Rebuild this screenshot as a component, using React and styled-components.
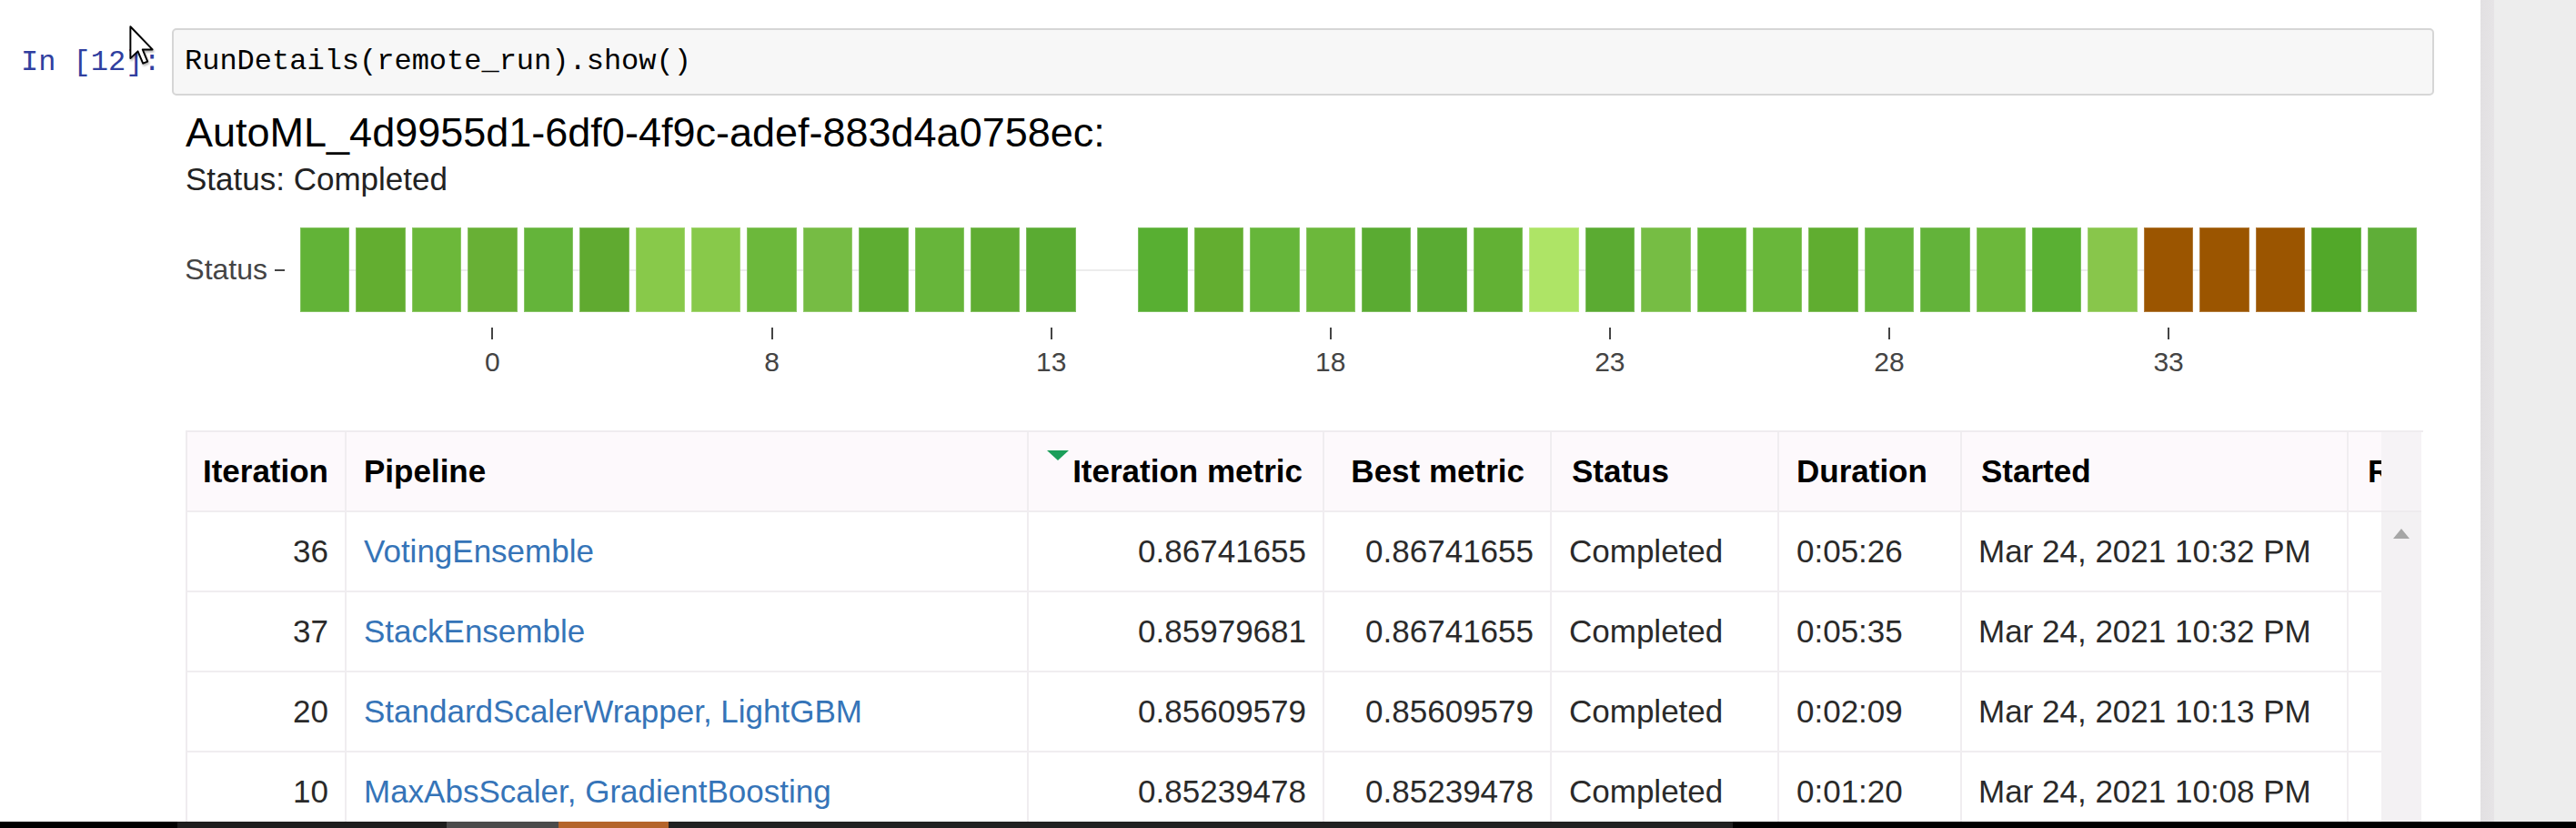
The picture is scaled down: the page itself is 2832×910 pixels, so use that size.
import React from 'react';
import styled, { createGlobalStyle } from 'styled-components';

const GlobalStyle = createGlobalStyle`
  html, body {
    margin: 0;
    padding: 0;
    background: #fff;
    overflow: hidden;
  }
  body {
    font-family: "Liberation Sans", Arial, sans-serif;
  }
`;

const bars = [
  '#62b337', '#63ae30', '#6cb83a', '#68b035', '#64b43a', '#60aa30', '#88c94a',
  '#88c94a', '#6cb83b', '#76bc44', '#5ead32', '#67b53a', '#60ad33', '#5aab32',
  null,
  '#58af32', '#63ae30', '#66b63a', '#6cb83b', '#5aab32', '#5aab33', '#62b134',
  '#aee466', '#5bab32', '#76bd44', '#65b535', '#69b73a', '#60ad30', '#64b43a',
  '#63b33a', '#6cb83b', '#5ab033', '#88c64b', '#9b5500', '#9b5500', '#9b5500',
  '#52a829', '#5fae38',
];

const ticks = { 3: '0', 8: '8', 13: '13', 18: '18', 23: '23', 28: '28', 33: '33' };

const columns = [
  { title: 'Iteration', width: 175, align: 'right', hpad: 18, pad: 18 },
  { title: 'Pipeline', width: 750, align: 'left', hpad: 19, pad: 19 },
  { title: 'Iteration metric', width: 325, align: 'right', hpad: 22, pad: 18, sorted: true },
  { title: 'Best metric', width: 250, align: 'right', hpad: 28, pad: 18 },
  { title: 'Status', width: 250, align: 'left', hpad: 22, pad: 19 },
  { title: 'Duration', width: 201, align: 'left', hpad: 19, pad: 19 },
  { title: 'Started', width: 425, align: 'left', hpad: 21, pad: 18 },
  { title: 'Run ID', width: 300, align: 'left', hpad: 21, pad: 19 },
];

const runs = [
  ['36', 'VotingEnsemble', '0.86741655', '0.86741655', 'Completed', '0:05:26', 'Mar 24, 2021 10:32 PM', ''],
  ['37', 'StackEnsemble', '0.85979681', '0.86741655', 'Completed', '0:05:35', 'Mar 24, 2021 10:32 PM', ''],
  ['20', 'StandardScalerWrapper, LightGBM', '0.85609579', '0.85609579', 'Completed', '0:02:09', 'Mar 24, 2021 10:13 PM', ''],
  ['10', 'MaxAbsScaler, GradientBoosting', '0.85239478', '0.85239478', 'Completed', '0:01:20', 'Mar 24, 2021 10:08 PM', ''],
];

const taskbar = [
  [195, '#000'], [296, '#1d1d1d'], [123, '#4b4b4b'], [121, '#b4642b'], [1170, '#202020'], [927, '#000'],
];

const gridTemplate = columns.map((c) => `${c.width}px`).join(' ');

function App() {
  return (
    <>
      <GlobalStyle />
      <Screen>
        <Workspace>
          <Notebook>
            <Cell>
              <Prompt>In [12]:</Prompt>
              <InputBox>RunDetails(remote_run).show()</InputBox>
            </Cell>

            <Output>
              <RunTitle>AutoML_4d9955d1-6df0-4f9c-adef-883d4a0758ec:</RunTitle>
              <RunStatus>Status: Completed</RunStatus>

              <Chart>
                <AxisLabel>
                  Status
                  <AxisDash />
                </AxisLabel>
                <PlotColumn>
                  <BarGrid>
                    {bars.map((c, i) => (c ? <Bar key={i} $color={c} /> : <span key={i} />))}
                  </BarGrid>
                  <TickGrid>
                    {bars.map((_, i) => (
                      <TickCell key={i}>
                        {ticks[i] !== undefined && (
                          <>
                            <TickMark />
                            <TickLabel>{ticks[i]}</TickLabel>
                          </>
                        )}
                      </TickCell>
                    ))}
                  </TickGrid>
                </PlotColumn>
              </Chart>

              <TableFrame>
                <Viewport>
                  <HeaderRow>
                    {columns.map((c) => (
                      <HeaderCell key={c.title} $align={c.align} $pad={c.hpad}>
                        {c.sorted && <SortArrow />}
                        {c.title}
                      </HeaderCell>
                    ))}
                  </HeaderRow>
                  {runs.map((r) => (
                    <BodyRow key={r[0]}>
                      {r.map((v, i) => (
                        <BodyCell key={i} $align={columns[i].align} $pad={columns[i].pad}>
                          {i === 1 ? <PipelineLink>{v}</PipelineLink> : v}
                        </BodyCell>
                      ))}
                    </BodyRow>
                  ))}
                </Viewport>
                <ScrollBar>
                  <ScrollHead />
                  <ScrollTrack>
                    <ScrollUp />
                  </ScrollTrack>
                </ScrollBar>
              </TableFrame>
            </Output>

            <Pointer viewBox="0 0 20 31" width="30" height="46">
              <path
                d="M1.5 1.5 L1.5 25 L7 19.8 L10.8 28.8 L14.2 27.3 L10.5 18.5 L17.8 18.5 Z"
                fill="#fff"
                stroke="#000"
                strokeWidth="1.3"
                strokeLinejoin="round"
              />
            </Pointer>
          </Notebook>
          <Gutter />
        </Workspace>
        <Taskbar>
          {taskbar.map(([w, c], i) => (
            <TaskSegment key={i} $w={w} $color={c} />
          ))}
        </Taskbar>
      </Screen>
    </>
  );
}

const Screen = styled.div`
  width: 2832px;
  height: 910px;
  display: flex;
  flex-direction: column;
`;

const Workspace = styled.div`
  height: 903px;
  display: flex;
  overflow: hidden;
`;

const Notebook = styled.div`
  position: relative;
  flex: 1;
  background: #fff;
  overflow: hidden;
`;

const Gutter = styled.div`
  width: 105px;
  background: linear-gradient(to right, #e2e0e2 0, #e6e4e6 15px, #ededed 15px);
`;

const Cell = styled.div`
  display: flex;
  padding-top: 31px;
`;

const Prompt = styled.div`
  width: 189px;
  box-sizing: border-box;
  padding: 1px 0 0 23px;
  font-family: "Liberation Mono", "DejaVu Sans Mono", monospace;
  font-size: 32px;
  line-height: 74px;
  color: #303f9f;
  white-space: nowrap;
  overflow: hidden;
`;

const InputBox = styled.div`
  width: 2487px;
  height: 74px;
  box-sizing: border-box;
  padding-left: 12px;
  border: 2px solid #d6d6d6;
  border-radius: 5px;
  background: #f7f7f7;
  font-family: "Liberation Mono", "DejaVu Sans Mono", monospace;
  font-size: 32px;
  line-height: 70px;
  color: #000;
`;

const Output = styled.div`
  padding-left: 189px;
`;

const RunTitle = styled.div`
  margin: 14px 0 0 15px;
  font-size: 45px;
  line-height: 52px;
  color: #000;
`;

const RunStatus = styled.div`
  margin: 5px 0 0 15px;
  font-size: 35px;
  line-height: 40px;
  color: #222;
`;

const Chart = styled.div`
  display: flex;
  margin-top: 33px;
`;

const AxisLabel = styled.div`
  width: 141px;
  height: 93px;
  box-sizing: border-box;
  padding-right: 17px;
  display: flex;
  align-items: center;
  justify-content: flex-end;
  gap: 8px;
  font-size: 32px;
  color: #444;
`;

const AxisDash = styled.span`
  width: 11px;
  height: 2px;
  background: #444;
`;

const PlotColumn = styled.div`
  width: 2327px;
`;

const BarGrid = styled.div`
  display: grid;
  grid-template-columns: repeat(38, 1fr);
  column-gap: 7px;
  height: 93px;
  background: linear-gradient(#ececec, #ececec) center / 100% 2px no-repeat;
`;

const Bar = styled.div`
  background: ${(p) => p.$color};
  box-shadow: inset 0 0 0 1px rgba(255, 255, 255, 0.22);
`;

const TickGrid = styled.div`
  display: grid;
  grid-template-columns: repeat(38, 1fr);
  column-gap: 7px;
`;

const TickCell = styled.div`
  display: flex;
  flex-direction: column;
  align-items: center;
`;

const TickMark = styled.span`
  width: 2px;
  height: 13px;
  margin-top: 17px;
  background: #444;
`;

const TickLabel = styled.span`
  margin-top: 8px;
  font-size: 30px;
  line-height: 34px;
  color: #444;
`;

const TableFrame = styled.div`
  display: flex;
  width: 2458px;
  height: 500px;
  margin: 58px 0 0 15px;
  border-top: 2px solid #efecef;
  border-left: 2px solid #efecef;
`;

const Viewport = styled.div`
  width: 2412px;
  overflow: hidden;
`;

const RowBase = styled.div`
  display: grid;
  grid-template-columns: ${gridTemplate};
  height: 88px;
  box-sizing: border-box;
  border-bottom: 2px solid #f0edf0;
`;

const HeaderRow = styled(RowBase)`
  background: #fdf9fc;
`;

const BodyRow = styled(RowBase)`
  background: #fff;
`;

const CellBase = styled.div`
  position: relative;
  display: flex;
  align-items: center;
  justify-content: ${(p) => (p.$align === 'right' ? 'flex-end' : 'flex-start')};
  padding: 0 ${(p) => p.$pad}px;
  border-right: 2px solid #f0edf0;
  font-size: 35px;
  white-space: nowrap;
  overflow: hidden;
`;

const HeaderCell = styled(CellBase)`
  font-weight: bold;
  color: #000;
`;

const BodyCell = styled(CellBase)`
  color: #2a2a2a;
`;

const PipelineLink = styled.span`
  color: #3574b8;
`;

const SortArrow = styled.span`
  position: absolute;
  left: 20px;
  top: 20px;
  width: 0;
  height: 0;
  border-left: 12px solid transparent;
  border-right: 12px solid transparent;
  border-top: 11px solid #1b9e5a;
`;

const ScrollBar = styled.div`
  width: 44px;
  display: flex;
  flex-direction: column;
`;

const ScrollHead = styled.div`
  height: 88px;
  box-sizing: border-box;
  background: #f6f3f6;
  border-bottom: 2px solid #eeebee;
`;

const ScrollTrack = styled.div`
  flex: 1;
  background: #f3f1f3;
  display: flex;
  justify-content: center;
`;

const ScrollUp = styled.span`
  margin-top: 18px;
  width: 0;
  height: 0;
  border-left: 9px solid transparent;
  border-right: 9px solid transparent;
  border-bottom: 11px solid #a6a6a6;
`;

const Pointer = styled.svg`
  position: absolute;
  left: 141px;
  top: 27px;
  filter: drop-shadow(1px 2px 1px rgba(0, 0, 0, 0.3));
`;

const Taskbar = styled.div`
  display: flex;
  height: 7px;
`;

const TaskSegment = styled.div`
  width: ${(p) => p.$w}px;
  background: ${(p) => p.$color};
`;

export default App;
